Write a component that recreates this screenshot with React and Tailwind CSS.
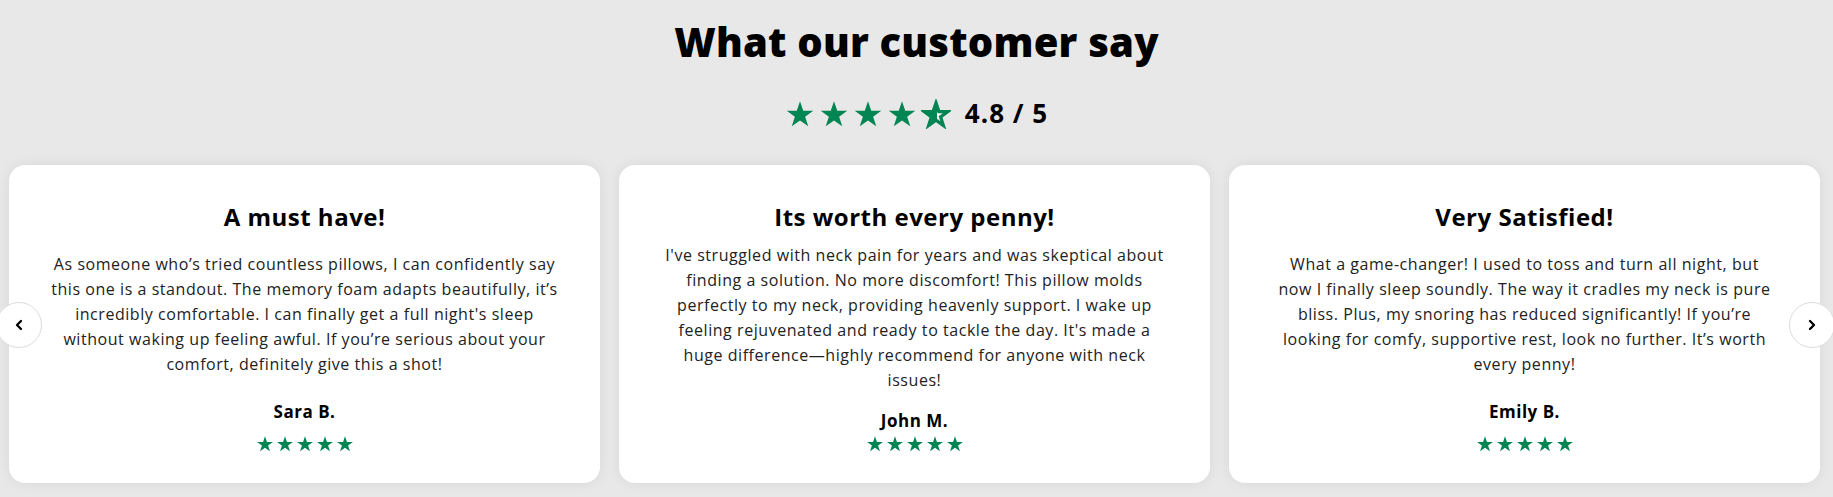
import { Fragment } from 'react'
import { ChevronLeft, ChevronRight } from 'lucide-react'

const GREEN = '#018552'

// lines kept as in the design so the wrap is the same in every font
const reviews = [
  {
    title: 'A must have!',
    lines: [
      'As someone who’s tried countless pillows, I can confidently say',
      'this one is a standout. The memory foam adapts beautifully, it’s',
      'incredibly comfortable. I can finally get a full night\'s sleep',
      'without waking up feeling awful. If you’re serious about your',
      'comfort, definitely give this a shot!',
    ],
    name: 'Sara B.',
  },
  {
    title: 'Its worth every penny!',
    lines: [
      'I\'ve struggled with neck pain for years and was skeptical about',
      'finding a solution. No more discomfort! This pillow molds',
      'perfectly to my neck, providing heavenly support. I wake up',
      'feeling rejuvenated and ready to tackle the day. It\'s made a',
      'huge difference—highly recommend for anyone with neck',
      'issues!',
    ],
    name: 'John M.',
  },
  {
    title: 'Very Satisfied!',
    lines: [
      'What a game-changer! I used to toss and turn all night, but',
      'now I finally sleep soundly. The way it cradles my neck is pure',
      'bliss. Plus, my snoring has reduced significantly! If you’re',
      'looking for comfy, supportive rest, look no further. It’s worth',
      'every penny!',
    ],
    name: 'Emily B.',
  },
]

const STAR = 'M12 1.2l2.6 7.6h8l-6.5 4.8 2.5 7.7L12 16.6l-6.6 4.7 2.5-7.7L1.4 8.8h8z'

function Star({ size }) {
  return (
    <svg width={size} height={size} viewBox="0 0 24 23">
      <path d={STAR} fill={GREEN} />
    </svg>
  )
}

function PartStar({ size }) {
  return (
    <svg width={size} height={size} viewBox="0 0 24 23">
      <defs>
        <linearGradient id="part" x1="0" x2="1" y1="0" y2="0">
          <stop offset="54%" stopColor={GREEN} />
          <stop offset="54%" stopColor="#f4f4f4" />
        </linearGradient>
      </defs>
      <path d="M12 2.6l2.3 6.9h7.2l-5.8 4.3 2.2 6.9L12 16.4l-5.9 4.3 2.2-6.9-5.8-4.3h7.2z" fill="url(#part)" stroke={GREEN} strokeWidth="2.6" strokeLinejoin="miter" />
    </svg>
  )
}

function ReviewCard({ review }) {
  return (
    <div className="bg-white rounded-[16px] h-[318px] flex flex-col items-center justify-between pt-[36px] pb-[28px] px-[20px] text-center shadow-[0_0_14px_rgba(0,0,0,0.07)]">
      <h3 className="text-[24px] leading-[32px] font-bold tracking-[0.5px] text-black">{review.title}</h3>
      <p className="text-[16px] leading-[25px] tracking-[0.55px] text-[#222] mt-[10px] whitespace-nowrap">
        {review.lines.map((l, i) => (
          <Fragment key={i}>
            {i > 0 && <br />}
            {l}
          </Fragment>
        ))}
      </p>
      <p className="text-[17px] leading-[24px] font-bold tracking-[0.5px] text-black mt-[15px]">{review.name}</p>
      <div className="flex gap-[2px] h-[22px] items-center">
        {[0, 1, 2, 3, 4].map(i => <Star key={i} size={18} />)}
      </div>
    </div>
  )
}

export default function App() {
  return (
    <div className="min-h-[497px] bg-[#e8e8e8] font-['Open_Sans',sans-serif] pt-[18px] overflow-hidden">
      <h2 className="text-center text-[40px] leading-[48px] font-extrabold tracking-[0.2px] text-black">What our customer say</h2>

      <div className="flex items-center justify-center mt-[28px]">
        <div className="flex gap-[4px]">
          {[0, 1, 2, 3].map(i => <Star key={i} size={30} />)}
          <PartStar size={30} />
        </div>
        <span className="ml-[14px] text-[26px] font-bold tracking-[1px] text-black">4.8 / 5</span>
      </div>

      <div className="relative mt-[32px]">
        <div className="grid grid-cols-3 gap-[19px] pl-[9px] pr-[13px]">
          {reviews.map(r => <ReviewCard key={r.name} review={r} />)}
        </div>

        <button className="absolute left-[-4px] top-[137px] w-[46px] h-[46px] rounded-full bg-white border border-[#dcdcdc] flex items-center justify-center">
          <ChevronLeft size={16} strokeWidth={3.5} className="text-black" />
        </button>
        <button className="absolute right-[-2px] top-[137px] w-[46px] h-[46px] rounded-full bg-white border border-[#dcdcdc] flex items-center justify-center">
          <ChevronRight size={16} strokeWidth={3.5} className="text-black" />
        </button>
      </div>
    </div>
  )
}
